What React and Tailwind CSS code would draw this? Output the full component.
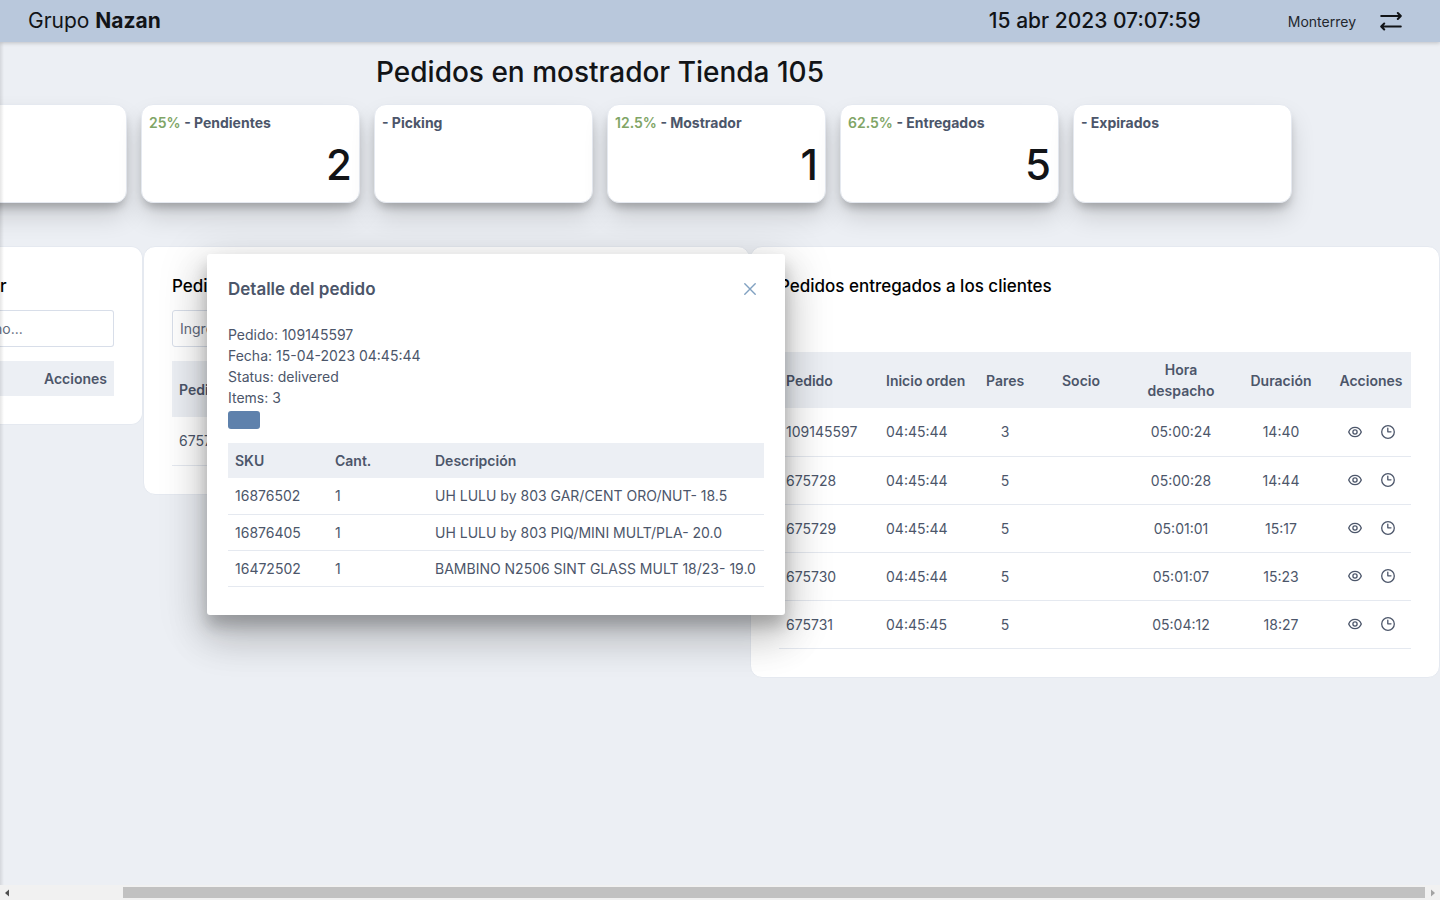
const stats = [
  { label: "", pct: "", value: "" },
  { label: "- Pendientes", pct: "25%", value: "2" },
  { label: "- Picking", pct: "", value: "" },
  { label: "- Mostrador", pct: "12.5%", value: "1" },
  { label: "- Entregados", pct: "62.5%", value: "5" },
  { label: "- Expirados", pct: "", value: "" },
];

const delivered = [
  ["109145597", "04:45:44", "3", "", "05:00:24", "14:40"],
  ["675728", "04:45:44", "5", "", "05:00:28", "14:44"],
  ["675729", "04:45:44", "5", "", "05:01:01", "15:17"],
  ["675730", "04:45:44", "5", "", "05:01:07", "15:23"],
  ["675731", "04:45:45", "5", "", "05:04:12", "18:27"],
];

const items = [
  ["16876502", "1", "UH LULU by 803 GAR/CENT ORO/NUT- 18.5"],
  ["16876405", "1", "UH LULU by 803 PIQ/MINI MULT/PLA- 20.0"],
  ["16472502", "1", "BAMBINO N2506 SINT GLASS MULT 18/23- 19.0"],
];

function SwapIcon() {
  return (
    <svg width="22" height="20" viewBox="0 0 22 20" fill="none" stroke="currentColor" strokeWidth="2" strokeLinecap="round" strokeLinejoin="round" aria-hidden="true">
      <path d="M1.200 5H20.500M17.800 2L20.800 5L17.800 8" />
      <path d="M20.800 15.500H1.500M4.200 12.500L1.200 15.500L4.200 18.500" />
    </svg>
  );
}

function EyeIcon() {
  return (
    <svg width="14" height="14" viewBox="0 0 14 14" fill="none" stroke="currentColor" strokeWidth="1.3" aria-hidden="true">
      <path d="M.7 7C1.900 4 4.300 2.400 7 2.400S12.100 4 13.300 7C12.100 10 9.700 11.600 7 11.600S1.900 10 .7 7Z" strokeLinejoin="round" />
      <circle cx="7" cy="7" r="2.100" />
    </svg>
  );
}

function ClockIcon() {
  return (
    <svg width="14" height="14" viewBox="0 0 14 14" fill="none" stroke="currentColor" strokeWidth="1.3" aria-hidden="true">
      <circle cx="7" cy="7" r="6.300" />
      <path d="M6.800 3.200V6.800H10" strokeLinecap="round" strokeLinejoin="round" />
    </svg>
  );
}

function Header() {
  return (
    <header className="relative z-10 flex h-[42px] shrink-0 items-center bg-[#b9c8dc] pr-[38px] pl-7 text-[#121417] shadow-[0_1px_4px_rgba(0,0,0,0.2)]">
      <div className="text-[21px] leading-7">
        Grupo <span className="font-bold">Nazan</span>
      </div>
      <time className="mr-[87px] ml-auto text-[21px] leading-7 font-medium">15 abr 2023 07:07:59</time>
      <span className="mr-6 pt-0.5 text-sm text-[#23272e]">Monterrey</span>
      <button type="button" aria-label="Cambiar tienda">
        <SwapIcon />
      </button>
    </header>
  );
}

function StatCard({ label, pct, value }) {
  return (
    <article className="h-[99px] min-w-0 flex-1 rounded-xl border border-[#e5e9f0] bg-white px-[7px] py-[7px] shadow-[0_14px_26px_-2px_rgba(0,0,0,0.16),0_7px_10px_-3px_rgba(0,0,0,0.24)]">
      <h2 className="h-[21px] text-sm leading-[21px] font-bold text-[#4c566a]">
        {pct && <span className="font-semibold text-[#80a566]">{pct} </span>}
        {label}
      </h2>
      <p className="text-right text-[42px] leading-[63px] font-medium text-[#121417]">{value}</p>
    </article>
  );
}

function DeliveredPanel() {
  return (
    <section className="w-[690px] shrink-0 rounded-xl border border-[#e5e9f0] bg-white px-7 pt-[29px] pb-7">
      <h2 className="text-[17px] leading-5 font-medium text-black">Pedidos entregados a los clientes</h2>
      <table className="mt-14 w-full table-fixed text-sm leading-[21px]">
        <colgroup>
          <col className="w-[100px]" />
          <col className="w-[100px]" />
          <col className="w-[52px]" />
          <col className="w-[100px]" />
          <col className="w-[100px]" />
          <col className="w-[100px]" />
          <col />
        </colgroup>
        <thead>
          <tr className="h-14 bg-[#eceff4]">
            <th className="px-[7px] text-left font-semibold">Pedido</th>
            <th className="px-[7px] text-left font-semibold">Inicio orden</th>
            <th className="px-[7px] text-center font-semibold">Pares</th>
            <th className="px-[7px] text-center font-semibold">Socio</th>
            <th className="px-[7px] text-center font-semibold">Hora despacho</th>
            <th className="px-[7px] text-center font-semibold">Duración</th>
            <th className="px-[7px] text-center font-semibold">Acciones</th>
          </tr>
        </thead>
        <tbody>
          {delivered.map((row) => (
            <tr key={row[0]} className="h-12 border-b border-[#e5e9f0]">
              {row.map((cell, i) => (
                <td key={i} className={i < 2 ? "px-[7px]" : "px-[7px] text-center"}>
                  {cell}
                </td>
              ))}
              <td>
                <div className="flex items-center justify-center gap-[19px]">
                  <button type="button" aria-label="Ver detalle">
                    <EyeIcon />
                  </button>
                  <button type="button" aria-label="Ver historial">
                    <ClockIcon />
                  </button>
                </div>
              </td>
            </tr>
          ))}
        </tbody>
      </table>
    </section>
  );
}

function OrderDialog() {
  return (
    <div role="dialog" aria-labelledby="detail-title" className="absolute top-[254px] left-[207px] z-20 w-[578px] rounded-[3px] bg-white px-[21px] pt-[21px] pb-7 shadow-[0_9px_46px_8px_rgba(0,0,0,0.12),0_24px_38px_3px_rgba(0,0,0,0.14),0_11px_15px_rgba(0,0,0,0.2)]">
      <div className="flex h-7 items-center justify-between">
        <h2 id="detail-title" className="text-[17px] leading-7 font-semibold">Detalle del pedido</h2>
        <button type="button" aria-label="Cerrar" className="flex size-7 items-center justify-center text-[#81a1c1]">
          <svg width="12" height="12" viewBox="0 0 12 12" fill="none" stroke="currentColor" strokeWidth="1.400" strokeLinecap="round" aria-hidden="true">
            <path d="M.8.8L11.200 11.200M11.200.8L.8 11.200" />
          </svg>
        </button>
      </div>
      <div className="mt-[21px] text-sm leading-[21px]">
        <p>Pedido: 109145597</p>
        <p>Fecha: 15-04-2023 04:45:44</p>
        <p>Status: delivered</p>
        <p>Items: 3</p>
      </div>
      <button type="button" aria-label="Acción" className="mt-[3px] block h-[18px] w-8 rounded-[3px] bg-[#5e81ac]" />
      <table className="mt-3.5 w-full table-fixed text-sm leading-[21px]">
        <colgroup>
          <col className="w-[100px]" />
          <col className="w-[100px]" />
          <col />
        </colgroup>
        <thead>
          <tr className="h-[35px] bg-[#eceff4] text-left">
            <th className="px-[7px] font-semibold">SKU</th>
            <th className="px-[7px] font-semibold">Cant.</th>
            <th className="px-[7px] font-semibold">Descripción</th>
          </tr>
        </thead>
        <tbody>
          {items.map((row) => (
            <tr key={row[0]} className="h-9 border-b border-[#e5e9f0]">
              {row.map((cell, i) => (
                <td key={i} className="px-[7px] whitespace-nowrap">{cell}</td>
              ))}
            </tr>
          ))}
        </tbody>
      </table>
    </div>
  );
}

export default function App() {
  return (
    <div className="relative flex min-h-screen flex-col overflow-hidden bg-[#eceff4] font-['Inter',sans-serif] text-[#4c566a]">
      <Header />
      <div className="flex grow flex-col">
        <main className="grow">
          <div className="-ml-[120px] mr-[120px] px-7">
            <h1 className="pt-[9px] text-center text-[28px] leading-[42px] font-medium text-[#121417]">
              Pedidos en mostrador Tienda 105
            </h1>
            <div className="mt-[11px] flex gap-3.5">
              {stats.map((s, i) => (
                <StatCard key={i} {...s} />
              ))}
            </div>
          </div>
          <div className="relative mt-[43px] flex items-start">
            <section className="w-[143px] shrink-0 rounded-r-xl border border-l-0 border-[#e5e9f0] bg-white pt-[29px] pr-7 pb-7">
              <h2 className="text-[17px] leading-5 font-medium text-black">r</h2>
              <input
                aria-label="Buscar pedido"
                placeholder="no..."
                className="mt-3.5 -ml-[6px] block h-[37px] w-[calc(100%+6px)] rounded-r-[3px] border border-l-0 border-[#d8dee9] bg-white text-sm placeholder:text-[#616a7c]"
              />
              <table className="mt-3.5 w-full text-sm leading-[21px]">
                <thead>
                  <tr className="h-[35px] bg-[#eceff4]">
                    <th className="px-[7px] text-right font-semibold">Acciones</th>
                  </tr>
                </thead>
              </table>
            </section>
            <section className="min-w-0 flex-1 rounded-xl border border-[#e5e9f0] bg-white px-7 pt-[29px] pb-7">
              <h2 className="text-[17px] leading-5 font-medium text-black">Pedidos</h2>
              <input
                aria-label="Buscar en mostrador"
                placeholder="Ingrese"
                className="mt-3.5 block h-[37px] w-60 rounded-[3px] border border-[#d8dee9] bg-white px-[7px] text-sm placeholder:text-[#616a7c]"
              />
              <table className="mt-3.5 w-full text-sm leading-[21px]">
                <thead>
                  <tr className="h-14 bg-[#eceff4]">
                    <th className="px-[7px] text-left font-semibold">Pedido</th>
                  </tr>
                </thead>
                <tbody>
                  <tr className="h-12 border-b border-[#e5e9f0]">
                    <td className="px-[7px]">675732</td>
                  </tr>
                </tbody>
              </table>
            </section>
            <DeliveredPanel />
          </div>
        </main>
        <div aria-hidden="true" className="relative z-10 flex h-[15px] shrink-0 items-center bg-[#f1f1f1] px-[5px]">
          <svg width="4" height="8" viewBox="0 0 4 8" fill="#505050"><path d="M4 .5V7.500L0 4Z" /></svg>
          <div className="mr-[6px] ml-[114px] h-[11px] flex-1 bg-[#c1c1c1]" />
          <svg width="4" height="8" viewBox="0 0 4 8" fill="#a3a3a3"><path d="M0 .5V7.500L4 4Z" /></svg>
        </div>
      </div>
      <div aria-hidden="true" className="pointer-events-none absolute top-[42px] bottom-[15px] left-0 w-1 bg-linear-to-r from-black/10 to-transparent" />
      <OrderDialog />
    </div>
  );
}
